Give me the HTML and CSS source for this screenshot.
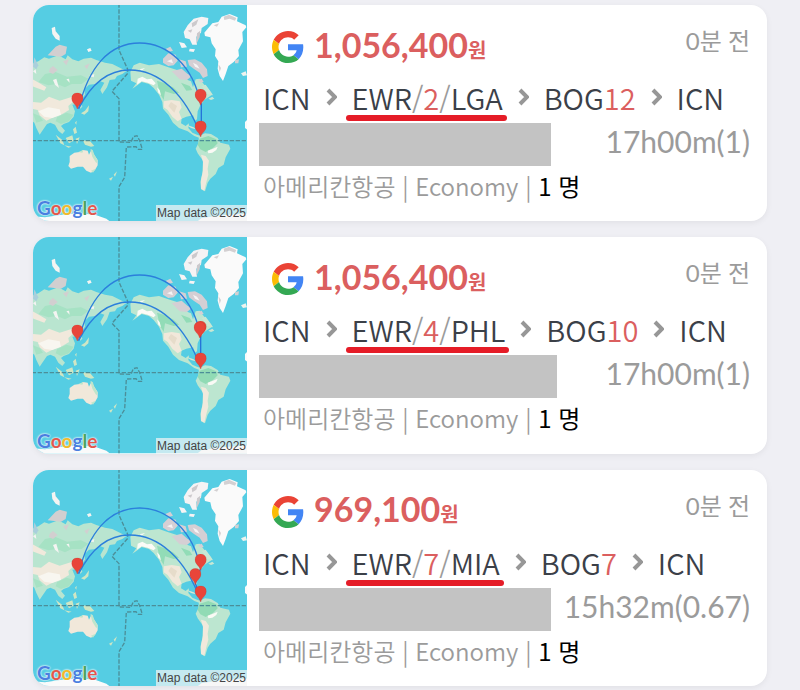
FILE: index.html
```html
<!DOCTYPE html>
<html lang="ko">
<head>
  <meta charset="UTF-8">
  <meta name="viewport" content="width=device-width, initial-scale=1">
  <title>항공권</title>
  <link rel="stylesheet" href="styles.css">
</head>
<body>

  <!-- shared drawings -->
  <svg class="defs" aria-hidden="true">
    <symbol id="world" viewBox="24 15 642 649" preserveAspectRatio="none">
      <rect x="20" y="10" width="650" height="660" fill="#55cde3"/>
      <!-- asia -->
      <path fill="#b9e5d0" d="M20 192L40 184L58 172L72 176L100 166L122 178L128 166L142 178L160 184L176 176L198 173L214 180L240 188L262 192L286 204L304 213L292 222L276 228L270 238L254 240L246 262L232 282L226 270L238 248L226 244L212 252L192 254L178 268L180 284L166 302L172 320L164 328L156 312L142 314L150 334L146 350L132 366L116 372L108 378L120 392L112 402L100 392L90 374L76 368L66 372L52 392L44 404L34 384L28 368L20 362Z"/>
      <path fill="#a6e2c4" d="M60 222L92 216L126 230L168 226L190 236L170 252L140 252L120 262L96 252L70 256L40 246ZM96 352L124 338L146 344L132 364L108 372L92 364ZM24 340L44 348L54 362L34 368Z"/>
      <path fill="#f1e9dc" d="M20 306L48 308L72 290L104 302L142 290L146 304L130 318L132 330L112 342L86 352L64 362L44 346L38 330L20 326ZM20 236L44 250L64 262L58 272L20 258Z"/>
      <path fill="#f8f6f0" d="M40 334L70 322L104 328L108 344L82 354L58 350Z"/>
      <path fill="#d2cfd0" d="M68 166L92 140L104 134L126 140L122 162L108 170L88 168ZM74 206L84 198L98 210L84 222L72 216ZM114 184L132 178L124 196ZM178 198L194 190L186 208Z"/>
      <path fill="#f4f4f2" d="M80 84L90 80L92 94L104 108L104 122L92 116L82 102ZM186 148L196 144L200 152L190 156ZM24 214L32 208L34 222ZM84 240L94 236L102 264L90 254ZM124 238L132 236L134 248ZM192 228L208 222L206 232Z"/>
      <path fill="#a9cfdc" d="M28 172L40 196L34 208L24 200Z"/>
      <!-- islands off asia -->
      <path fill="#cfe6c4" d="M168 340L180 332L192 316L190 334L178 344ZM150 368L155 362L154 374ZM144 388L152 380L156 398L148 402ZM92 404L112 420L118 436L106 430ZM122 414L142 406L146 422L132 430ZM152 416L164 412L156 432ZM174 422L192 420L208 438L198 440L180 434ZM118 436L140 440L130 443ZM252 536L264 530L258 542ZM266 524L276 514L270 530Z"/>
      <!-- australia -->
      <path fill="#f1e8da" d="M134 468L148 458L164 456L174 450L188 452L192 464L200 448L206 462L218 480L218 496L210 510L198 518L184 512L174 500L158 500L138 506L130 498L134 486Z"/>
      <path fill="#bfe5cb" d="M196 448L203 450L208 464L218 482L214 490L202 470ZM198 512L212 506L204 518ZM160 456L176 450L172 458Z"/>
      <!-- north america -->
      <path fill="#bde6d0" d="M316 216L326 196L344 188L372 196L402 192L430 202L456 210L470 220L478 236L498 244L504 262L512 238L524 236L534 250L550 268L562 284L550 292L538 300L526 316L518 334L516 358L510 362L504 346L484 350L470 356L468 370L482 378L492 370L490 384L502 398L516 404L528 408L524 414L508 408L488 394L462 384L444 368L430 344L414 326L412 306L402 284L386 264L372 252L350 246L334 258L322 266L334 250L318 242Z"/>
      <path fill="#92dcb7" d="M396 242L420 250L444 262L462 278L446 282L420 274L416 300L404 280ZM468 248L494 258L502 270L484 272Z"/>
      <path fill="#f1e8da" d="M416 304L440 300L464 304L470 322L462 336L470 356L458 364L442 350L428 330L416 322Z"/>
      <path fill="#e6dcca" d="M438 306L456 318L448 338L430 318Z"/>
      <path fill="#fbfbf7" d="M338 236L352 230L366 238L380 236L392 250L386 256L368 248L350 244L336 254ZM396 262L404 270L408 286L400 278ZM344 208L360 204L350 212Z"/>
      <path fill="#d5cfd4" d="M440 214L470 206L488 222L500 228L486 240L464 238ZM414 176L430 160L452 164L458 182L446 196L430 198L414 188ZM488 180L510 178L530 188L546 208L548 228L534 234L524 218L506 206L492 196ZM420 148L436 140L444 152L430 156ZM462 178L482 184L486 200L468 202ZM520 240L530 236L536 246L526 248Z"/>
      <path fill="#f6f4f5" d="M426 184L440 178L444 190ZM504 188L516 194L524 206L510 200ZM462 126L478 130L486 142L470 144ZM494 146L510 148L506 156L492 154Z"/>
      <path fill="#c9e7d4" d="M530 258L542 254L558 276L564 286L548 282ZM550 296L562 290L568 296L558 300Z"/>
      <!-- arctic islands and greenland -->
      <path fill="#f5f3f4" d="M476 96L488 76L506 56L530 50L550 54L548 72L530 84L528 98L514 110L516 134L502 134L494 118L480 114Z"/>
      <path fill="#ccc9cc" d="M500 70L520 58L514 74L502 82ZM488 92L502 88L498 98ZM516 100L526 92L524 112L514 132Z"/>
      <path fill="#fafafa" d="M538 98L562 70L580 66L590 50L614 42L638 52L636 64L662 76L664 82L652 96L654 124L640 150L642 168L626 186L610 198L602 222L594 243L584 228L578 206L580 184L570 168L572 148L560 130L556 112L540 108Z"/>
      <path fill="#d3d0d2" d="M596 50L612 44L634 54L630 62L614 56L598 60ZM566 76L582 70L576 80ZM630 180L642 178L640 190L630 190ZM580 192L588 204L584 216Z"/>
      <path fill="#eef3ee" d="M648 220L662 214L666 226L654 228Z"/>
      <!-- south america -->
      <path fill="#bce6d0" d="M522 408L540 400L558 402L578 414L586 428L612 434L616 446L602 472L596 494L580 504L572 522L556 536L548 548L540 574L528 568L526 546L532 520L534 482L518 460L512 446L520 430Z"/>
      <path fill="#91dbb5" d="M524 416L550 408L574 418L578 430L564 444L542 456L526 448L518 434Z"/>
      <path fill="#f1e9dc" d="M528 464L542 468L552 482L548 506L550 524L544 546L538 572L528 566L528 540L534 512L534 486Z"/>
      <path fill="#fafaf5" d="M548 452L560 448L578 440L574 450L562 458L550 460Z"/>
      <path fill="#d4e8d5" d="M484 374L506 382L512 388L498 384Z"/>
      <!-- antarctica and map edge -->
      <path fill="#fafafa" d="M20 648L60 652L110 644L160 640L210 644L244 656L262 670L20 670ZM510 670L530 654L590 646L670 640L670 670ZM660 366L668 358L668 390L660 384Z"/>
      <!-- equator and date line -->
      <g fill="none" stroke="#4c8e98" stroke-width="4" stroke-dasharray="13 5">
        <path d="M20 422H670"/>
        <path d="M282 10V150L308 208V220L261 274L282 296V426L318 427L325 410L336 407L344 422L352 448L340 448L333 440L304 441L299 532L282 560V670"/>
      </g>
      <g fill="none" stroke="#2b7fdc" stroke-width="4">
        <path d="M161 326C190 202 252 129 344 129C430 129 504 200 526 308"/>
        <path d="M161 326C198 252 250 210 314 210C400 210 480 278 527 406"/>
      </g>
    </symbol>

    <symbol id="pin" viewBox="0 0 36 50">
      <path fill="#e8453a" stroke="#c5392f" stroke-width="1" d="M18 49C16 36 1 31 1 17A17 17 0 0 1 35 17C35 31 20 36 18 49Z"/>
    </symbol>

    <symbol id="google" viewBox="0 0 48 48">
      <path fill="#ea4335" d="M24 9.5c3.54 0 6.71 1.22 9.21 3.6l6.85-6.85C35.9 2.38 30.47 0 24 0 14.62 0 6.51 5.38 2.56 13.22l7.98 6.19C12.43 13.72 17.74 9.5 24 9.5z"/>
      <path fill="#4285f4" d="M46.98 24.55c0-1.57-.15-3.09-.38-4.55H24v9.02h12.94c-.58 2.96-2.26 5.48-4.78 7.18l7.73 6c4.51-4.18 7.09-10.36 7.09-17.65z"/>
      <path fill="#fbbc05" d="M10.53 28.59c-.48-1.45-.76-2.99-.76-4.59s.27-3.14.76-4.59l-7.98-6.19C.92 16.46 0 20.12 0 24c0 3.88.92 7.54 2.56 10.78l7.97-6.19z"/>
      <path fill="#34a853" d="M24 48c6.48 0 11.93-2.13 15.89-5.81l-7.73-6c-2.15 1.45-4.92 2.3-8.16 2.3-6.26 0-11.57-4.22-13.47-9.91l-7.98 6.19C6.51 42.62 14.62 48 24 48z"/>
    </symbol>

    <symbol id="chevron" viewBox="0 0 11 18">
      <path fill="none" stroke="#979797" stroke-width="4" d="M2 2L9 9L2 16"/>
    </symbol>
  </svg>

  <main class="list">

    <article class="card">
      <div class="map">
        <svg class="map-image" viewBox="24 15 642 649" preserveAspectRatio="none" role="img" aria-label="ICN EWR LGA BOG ICN">
          <use href="#world" x="24" y="15" width="642" height="649"/>
          <path d="M529 310V370" fill="none" stroke="#2474d8" stroke-width="4"/>
          <use href="#pin" x="139" y="278" width="36" height="50"/>
          <use href="#pin" x="509" y="267" width="36" height="50"/>
          <use href="#pin" x="509" y="362" width="36" height="50"/>
        </svg>
        <div class="map-logo"><span class="blue">G</span><span class="red">o</span><span class="yellow">o</span><span class="blue">g</span><span class="green">l</span><span class="red">e</span></div>
        <div class="map-credit">Map data ©2025</div>
      </div>
      <div class="info">
        <div class="price-row">
          <svg class="google"><use href="#google"/></svg>
          <div class="price">1,056,400<small>원</small></div>
          <div class="time">0분 전</div>
        </div>
        <div class="route">
          <span>ICN</span>
          <svg class="chevron"><use href="#chevron"/></svg>
          <span class="marked">EWR<i>/</i><b>2</b><i>/</i>LGA</span>
          <svg class="chevron"><use href="#chevron"/></svg>
          <span>BOG<b>12</b></span>
          <svg class="chevron"><use href="#chevron"/></svg>
          <span>ICN</span>
        </div>
        <div class="duration-row">
          <div class="hidden-dates"></div>
          <div class="duration">17h00m(1)</div>
        </div>
        <div class="airline">아메리칸항공 | Economy | <strong>1 명</strong></div>
      </div>
    </article>

    <article class="card">
      <div class="map">
        <svg class="map-image" viewBox="24 15 642 649" preserveAspectRatio="none" role="img" aria-label="ICN EWR PHL BOG ICN">
          <use href="#world" x="24" y="15" width="642" height="649"/>
          <path d="M527 310V370" fill="none" stroke="#2474d8" stroke-width="4"/>
          <use href="#pin" x="139" y="278" width="36" height="50"/>
          <use href="#pin" x="509" y="267" width="36" height="50"/>
          <use href="#pin" x="506" y="269" width="36" height="50"/>
          <use href="#pin" x="509" y="362" width="36" height="50"/>
        </svg>
        <div class="map-logo"><span class="blue">G</span><span class="red">o</span><span class="yellow">o</span><span class="blue">g</span><span class="green">l</span><span class="red">e</span></div>
        <div class="map-credit">Map data ©2025</div>
      </div>
      <div class="info">
        <div class="price-row">
          <svg class="google"><use href="#google"/></svg>
          <div class="price">1,056,400<small>원</small></div>
          <div class="time">0분 전</div>
        </div>
        <div class="route">
          <span>ICN</span>
          <svg class="chevron"><use href="#chevron"/></svg>
          <span class="marked">EWR<i>/</i><b>4</b><i>/</i>PHL</span>
          <svg class="chevron"><use href="#chevron"/></svg>
          <span>BOG<b>10</b></span>
          <svg class="chevron"><use href="#chevron"/></svg>
          <span>ICN</span>
        </div>
        <div class="duration-row">
          <div class="hidden-dates wide"></div>
          <div class="duration">17h00m(1)</div>
        </div>
        <div class="airline">아메리칸항공 | Economy | <strong>1 명</strong></div>
      </div>
    </article>

    <article class="card">
      <div class="map">
        <svg class="map-image" viewBox="24 15 642 649" preserveAspectRatio="none" role="img" aria-label="ICN EWR MIA BOG ICN">
          <use href="#world" x="24" y="15" width="642" height="649"/>
          <path d="M527 310L511 355L527 400" fill="none" stroke="#2474d8" stroke-width="4"/>
          <use href="#pin" x="139" y="278" width="36" height="50"/>
          <use href="#pin" x="509" y="267" width="36" height="50"/>
          <use href="#pin" x="493" y="310" width="36" height="50"/>
          <use href="#pin" x="509" y="362" width="36" height="50"/>
        </svg>
        <div class="map-logo"><span class="blue">G</span><span class="red">o</span><span class="yellow">o</span><span class="blue">g</span><span class="green">l</span><span class="red">e</span></div>
        <div class="map-credit">Map data ©2025</div>
      </div>
      <div class="info">
        <div class="price-row">
          <svg class="google"><use href="#google"/></svg>
          <div class="price">969,100<small>원</small></div>
          <div class="time">0분 전</div>
        </div>
        <div class="route">
          <span>ICN</span>
          <svg class="chevron"><use href="#chevron"/></svg>
          <span class="marked">EWR<i>/</i><b>7</b><i>/</i>MIA</span>
          <svg class="chevron"><use href="#chevron"/></svg>
          <span>BOG<b>7</b></span>
          <svg class="chevron"><use href="#chevron"/></svg>
          <span>ICN</span>
        </div>
        <div class="duration-row">
          <div class="hidden-dates"></div>
          <div class="duration">15h32m(0.67)</div>
        </div>
        <div class="airline">아메리칸항공 | Economy | <strong>1 명</strong></div>
      </div>
    </article>

  </main>

</body>
</html>
```

FILE: styles.css
```css
* {
  box-sizing: border-box;
}

body {
  margin: 0;
  background: #efeff4;
  font-family: "Noto Sans CJK KR", sans-serif;
  color: #3b4048;
}

.defs {
  position: absolute;
  width: 0;
  height: 0;
}

.list {
  display: flex;
  flex-direction: column;
  gap: 16px;
  padding: 5px 33px 4px;
}

.card {
  display: flex;
  background: #fff;
  border-radius: 16px;
  overflow: hidden;
  box-shadow: 0 2px 6px rgba(0, 0, 0, 0.06);
}

/* map */
.map {
  position: relative;
  flex: 0 0 214px;
}

.map-image {
  display: block;
  width: 100%;
  height: 100%;
}

.map-logo {
  position: absolute;
  left: 4px;
  bottom: 1px;
  font-family: Lato, sans-serif;
  font-size: 19px;
  font-weight: bold;
  line-height: 24px;
  text-shadow: 0 0 2px #fff, 0 0 2px #fff;
}

.blue {
  color: #4a7fe0;
}

.red {
  color: #e2574c;
}

.yellow {
  color: #f0b92d;
}

.green {
  color: #4ba45c;
}

.map-credit {
  position: absolute;
  right: 0;
  bottom: 0;
  padding: 0 1px;
  background: rgba(245, 245, 245, 0.7);
  color: #444;
  font-family: "Liberation Sans", Arial, sans-serif;
  font-size: 12px;
  line-height: 16px;
}

/* flight info */
.info {
  flex: 1;
  min-width: 0;
  padding: 22px 17px 16px 12px;
}

.price-row {
  display: flex;
  align-items: center;
  height: 40px;
  padding-left: 13px;
}

.google {
  width: 32px;
  height: 32px;
  margin-right: 10px;
}

.price {
  flex: 1;
  font-family: Lato, "Noto Sans CJK KR", sans-serif;
  font-size: 34px;
  font-weight: bold;
  line-height: 42px;
  color: #db5f5f;
}

.price small {
  font-size: 20px;
}

.time {
  align-self: flex-start;
  font-family: Lato, "Noto Sans CJK KR", sans-serif;
  font-size: 24px;
  line-height: 28px;
  color: #9b9b9b;
}

.route {
  display: flex;
  align-items: center;
  gap: 15px;
  height: 40px;
  margin: 10px 0 6px;
  padding-left: 4px;
  font-size: 29px;
  font-weight: 350;
  line-height: 40px;
  white-space: nowrap;
}

.route i {
  font-style: normal;
  color: #9b9b9b;
}

.route b {
  font-weight: 350;
  color: #db5f5f;
}

.chevron {
  flex: none;
  width: 11px;
  height: 18px;
}

.marked {
  position: relative;
}

.marked::after {
  content: "";
  position: absolute;
  left: -6px;
  right: -4px;
  bottom: -4px;
  height: 6px;
  border-radius: 3px;
  background: #e51c27;
}

.duration-row {
  display: flex;
  align-items: flex-start;
  justify-content: space-between;
}

.hidden-dates {
  width: 292px;
  height: 43px;
  background: #c3c3c3;
}

.hidden-dates.wide {
  width: 298px;
}

.duration {
  font-family: Lato, sans-serif;
  font-size: 30px;
  line-height: 36px;
  color: #9b9b9b;
}

.airline {
  padding-left: 4px;
  font-size: 24px;
  font-weight: 350;
  line-height: 39px;
  color: #9b9b9b;
}

.airline strong {
  font-weight: 400;
  color: #000;
}
```
